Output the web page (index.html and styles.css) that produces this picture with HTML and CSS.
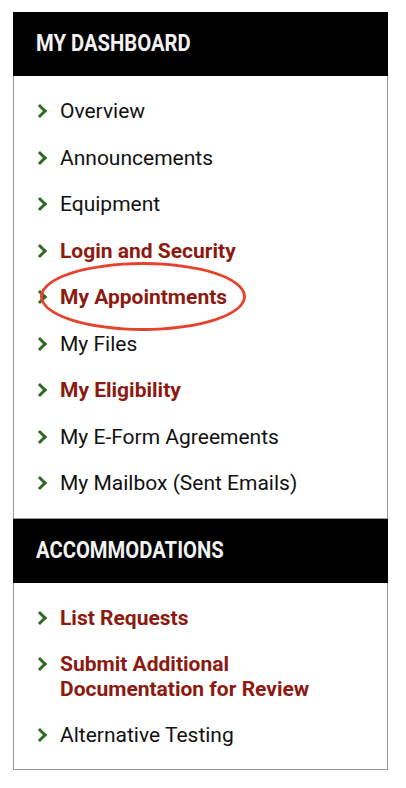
FILE: index.html
```html
<!DOCTYPE html>
<html lang="en">
<head>
    <meta charset="UTF-8">
    <meta name="viewport" content="width=device-width, initial-scale=1.0">
    <title>My Dashboard</title>
    <link rel="stylesheet" href="styles.css">
</head>
<body>
    <div class="sidebar">
        <h2 class="side-title"><span>MY DASHBOARD</span></h2>
        <ul class="side-list">
            <li><a href="#">Overview</a></li>
            <li><a href="#">Announcements</a></li>
            <li><a href="#">Equipment</a></li>
            <li><a href="#" class="hot">Login and Security</a></li>
            <li class="circled"><a href="#" class="hot">My Appointments</a></li>
            <li><a href="#">My Files</a></li>
            <li><a href="#" class="hot">My Eligibility</a></li>
            <li><a href="#">My E-Form Agreements</a></li>
            <li><a href="#">My Mailbox (Sent Emails)</a></li>
        </ul>

        <h2 class="side-title"><span>ACCOMMODATIONS</span></h2>
        <ul class="side-list">
            <li><a href="#" class="hot">List Requests</a></li>
            <li class="two-line"><a href="#" class="hot">Submit Additional<br>Documentation for Review</a></li>
            <li><a href="#">Alternative Testing</a></li>
        </ul>
    </div>
</body>
</html>
```

FILE: styles.css
```css
body {
    margin: 0;
    padding: 12px 0 0 13px;
    background: #ffffff;
    font-family: Roboto, Arial, sans-serif;
}
.sidebar {
    width: 375px;
}
.side-title {
    margin: 0;
    height: 64px;
    line-height: 64px;
    padding-left: 23px;
    background: #000;
    color: #f2f2f2;
    font-size: 23px;
    font-weight: 700;
}
/* squeeze the heading to look condensed */
.side-title span {
    display: inline-block;
    transform: scaleX(0.88);
    transform-origin: left center;
}
.side-list {
    list-style: none;
    margin: 0;
    padding: 12px 0 11px 0;
    border: 1px solid #999;
    border-top: none;
}
.side-list li {
    position: relative;
    padding: 11.25px 10px 11.25px 46px;
    font-size: 21px;
    line-height: 24px;
}
.side-list li.two-line {
    line-height: 25px;
    padding-bottom: 9.25px;
}
.side-list li::before {
    content: "";
    position: absolute;
    left: 21px;
    top: 18px;
    width: 7px;
    height: 7px;
    border-right: 3px solid #2f6a22;
    border-bottom: 3px solid #2f6a22;
    transform: rotate(-45deg);
}
.side-list a {
    color: #111;
    text-decoration: none;
}
.side-list a.hot {
    color: #8c1a10;
    font-weight: 700;
}
/* red ring drawn around one link */
.circled::after {
    content: "";
    position: absolute;
    left: 26px;
    top: -12px;
    width: 200px;
    height: 63px;
    border: 3.5px solid #e5432b;
    border-radius: 50%;
}
```
